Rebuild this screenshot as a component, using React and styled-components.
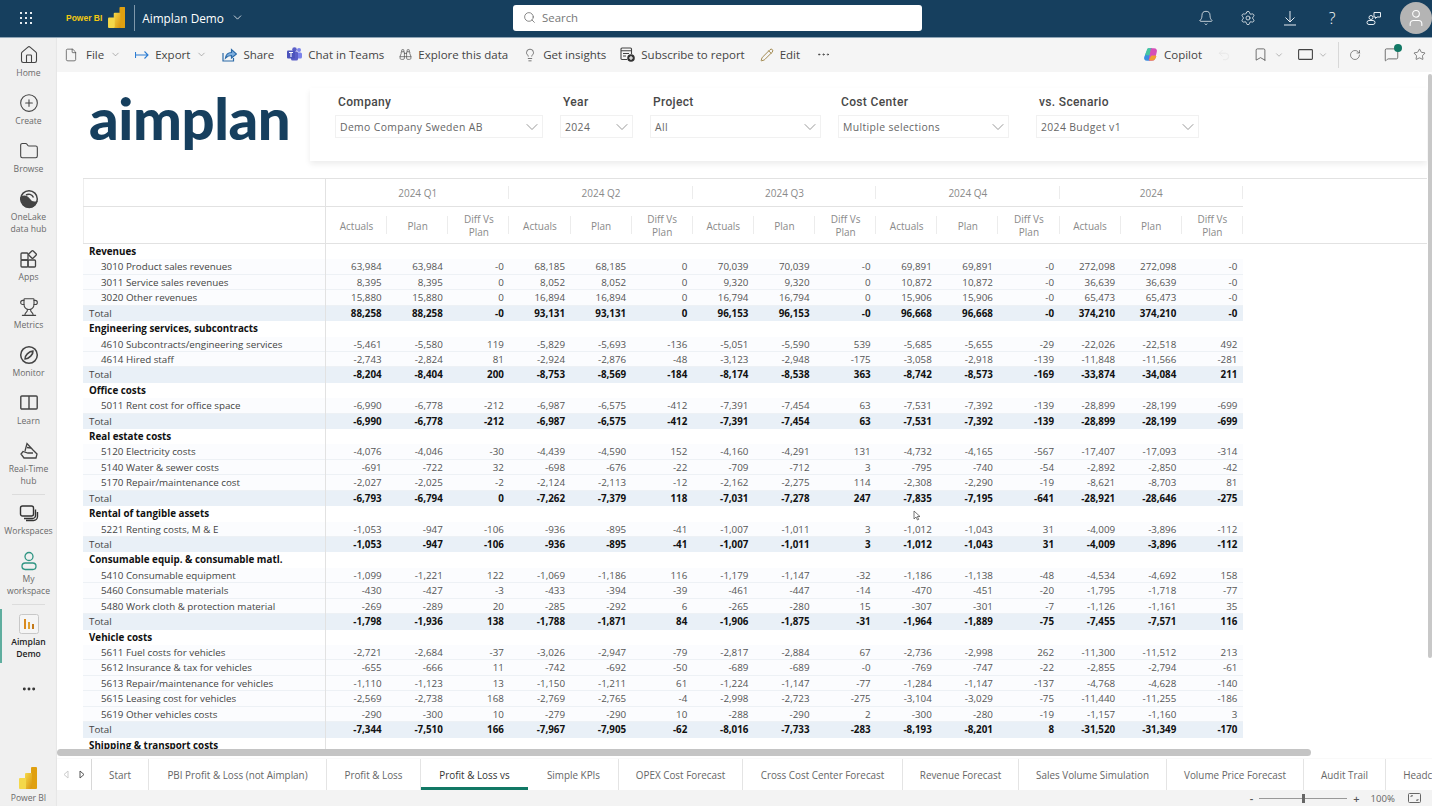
import React from 'react'
import styled, { createGlobalStyle } from 'styled-components'
import {
  Bell, Binoculars, Bookmark, ChevronDown, CirclePlus, Ellipsis, File, Folder, House,
  Lightbulb, MessageSquare, Pencil, RotateCw, Search, Settings, Star, Trophy, Undo2, User
} from 'lucide-react'

const GlobalStyle = createGlobalStyle`
html, body { margin: 0; padding: 0; height: 100%; overflow: hidden; }
body { font-family: "Open Sans", "Noto Sans", sans-serif; background: #fff; }
#root { height: 100%; }
* { box-sizing: border-box; }
`

const Page = styled.div`
width: 1432px;
height: 806px;
display: flex;
flex-direction: column;
overflow: hidden;
`

/* top bar */
const TopBar = styled.header`
height: 38px;
flex: none;
display: flex;
align-items: center;
padding-bottom: 2px;
background: #163f5e;
border-bottom: 1px solid #8fa5b6;
color: #fff;
`
const TopLeft = styled.div`
width: 513px;
display: flex;
align-items: center;
`
const Waffle = styled.div`
width: 14px;
margin: 0 30px 0 20px;
display: grid;
grid-template-columns: repeat(3, 2px);
gap: 3px;
span { width: 2px; height: 2px; background: #e6ecf1; }
`
const BrandText = styled.span`
font-family: "Liberation Sans", sans-serif;
font-size: 8.5px;
font-weight: 700;
color: #f2c811;
width: 42px;
margin-left: 2px;
`
const TitleDivider = styled.span`
width: 1px;
height: 26px;
background: #7f98ab;
margin: 0 7px 0 9px;
`
const ReportTitle = styled.span`
font-size: 11.8px;
margin-right: 7px;
`
const SearchBox = styled.div`
width: 409px;
height: 26px;
background: #fff;
border-radius: 3px;
display: flex;
align-items: center;
gap: 6px;
padding-left: 10px;
color: #777;
font-size: 11.4px;
`
const TopRight = styled.div`
flex: 1;
display: flex;
align-items: center;
justify-content: flex-end;
`
const TopIcon = styled.div`
width: 42px;
display: flex;
justify-content: center;
font-size: 16px;
font-weight: 300;
`
const Avatar = styled.div`
width: 32px;
height: 32px;
margin-left: 5px;
border-radius: 50%;
background: #b4b4b4;
display: flex;
align-items: center;
justify-content: center;
`

/* left rail */
const Body = styled.div`
flex: 1;
display: flex;
min-height: 0;
`
const Rail = styled.nav`
width: 57px;
flex: none;
background: #f0f0f0;
display: flex;
flex-direction: column;
align-items: stretch;
box-shadow: inset -1px 0 1px #e6e6e6;
`
const RailItem = styled.div`
position: relative;
padding: 7px 0;
display: flex;
flex-direction: column;
align-items: center;
gap: 2px;
color: #444;
`
const RailFoot = styled(RailItem)`
margin-top: auto;
padding-bottom: 2px;
gap: 4px;
`
const RailIcon = styled.div`
height: 20px;
display: flex;
align-items: center;
justify-content: center;
`
const RailLabel = styled.div`
font-size: 8.6px;
line-height: 12px;
text-align: center;
color: ${p => (p.$active ? '#222' : '#6a6a6a')};
font-weight: ${p => (p.$active ? 600 : 400)};
`
const ActiveMark = styled.span`
position: absolute;
left: 0;
top: 2px;
bottom: 4px;
width: 2px;
background: #5fae9f;
`
const RailDivider = styled.div`
height: 1px;
margin: 0 12px ${p => p.$after}px;
background: #dcdcdc;
`
const RailMore = styled.div`
display: flex;
justify-content: center;
padding: 14px 0;
color: #333;
`

/* main column */
const Main = styled.main`
flex: 1;
min-width: 0;
display: flex;
flex-direction: column;
`
const Toolbar = styled.div`
height: 34px;
flex: none;
background: #f5f5f5;
display: flex;
align-items: center;
padding: 0 6px 1px 7px;
color: #444;
font-size: 11.5px;
`
const ToolItem = styled.div`
display: flex;
align-items: center;
gap: 6px;
margin-right: ${p => p.$gap ?? 14}px;
white-space: nowrap;
`
const FileLabel = styled.span`
margin-left: 2px;
`
const ToolRight = styled.div`
margin-left: auto;
display: flex;
align-items: center;
`
const ToolSep = styled.span`
width: 1px;
height: 26px;
background: #d8d8d8;
margin: 0 10px 0 10px;
`
const IconWrap = styled.span`
position: relative;
display: flex;
margin-right: ${p => p.$gap ?? 0}px;
`
const Badge = styled.span`
position: absolute;
top: -3px;
right: -3px;
width: 8px;
height: 8px;
border-radius: 50%;
background: #117865;
`

/* report canvas */
const Canvas = styled.section`
position: relative;
flex: 1;
min-height: 0;
background: #fff;
display: flex;
flex-direction: column;
overflow: hidden;
`
const ReportHead = styled.div`
height: 106px;
flex: none;
display: flex;
align-items: flex-start;
padding: 16px 5px 0 32px;
`
const Logo = styled.div`
width: 221px;
height: 72px;
flex: none;
font-family: "Lato", sans-serif;
font-weight: 900;
font-size: 58px;
line-height: 60px;
letter-spacing: -0.4px;
color: #163f5e;
`
const SlicerCard = styled.div`
flex: 1;
height: 73px;
display: flex;
align-items: flex-start;
gap: 17px;
padding: 5px 0 0 25px;
background: #fff;
box-shadow: 0 3px 6px rgba(0, 0, 0, 0.08);
`
const Slicer = styled.div`
width: ${p => p.$w}px;
margin-right: ${p => p.$after ?? 0}px;
`
const SlicerTitle = styled.div`
font-family: "Roboto", sans-serif;
font-size: 12px;
font-weight: 500;
letter-spacing: 0.35px;
line-height: 16px;
color: #484848;
padding: 1px 0 0 3px;
margin-bottom: 5px;
`
const SlicerBox = styled.div`
height: 23px;
border: 1px solid #f1f1f1;
display: flex;
align-items: center;
justify-content: space-between;
padding: 0 0 0 4px;
font-size: 10.4px;
letter-spacing: 0.36px;
color: #666;
`

const TableArea = styled.div`
flex: 1;
min-height: 0;
margin: 0 5px 0 26px;
overflow: hidden;
border-top: 1px solid #e2e2e2;
`
const HeadRow = styled.div`
height: ${p => p.$h}px;
border-bottom: 1px solid #e2e2e2;
display: grid;
grid-template-columns: ${p => p.$columns};
width: ${p => (p.$wide ? '100%' : '1160px')};
`
const TitleCell = styled.div`
border-right: 1px solid #e2e2e2;
border-left: 1px solid #eee;
`
const HeadCell = styled.div`
position: relative;
display: flex;
align-items: center;
justify-content: center;
padding-top: 2px;
text-align: center;
font-size: 10px;
line-height: 13px;
color: #8a8a8a;
&::after {
  content: '';
  position: absolute;
  right: 0;
  top: ${p => p.$inset}px;
  bottom: ${p => p.$inset}px;
  width: 1px;
  background: #ececec;
}
`
const Row = styled.div`
width: 1160px;
height: 15.43px;
display: grid;
grid-template-columns: 243px repeat(15, 61.13px);
background: ${p => (p.$kind === 't' ? '#e9f0f7' : p.$kind === 'd' ? '#fbfcfe' : '#fff')};
box-shadow: ${p => (p.$kind === 'd' ? 'inset 0 -1px 0 #edf1f5' : 'none')};
font-size: 9.8px;
line-height: 16.4px;
white-space: nowrap;
`
const LabelCell = styled.div`
height: 15.43px;
border-right: 1px solid #e2e2e2;
padding-left: ${p => (p.$kind === 'd' ? 18 : 6)}px;
font-weight: ${p => (p.$kind === 'h' ? 700 : 400)};
color: ${p => (p.$kind === 'h' ? '#111' : '#444')};
overflow: hidden;
`
const NumCell = styled.div`
text-align: right;
padding-right: 5.5px;
font-weight: ${p => (p.$kind === 't' ? 700 : 400)};
color: ${p => (p.$kind === 't' ? '#111' : '#555')};
`
const VScroll = styled.div`
position: absolute;
top: 2px;
right: 0;
width: 4px;
height: 584px;
background: #c8c8c8;
border-radius: 2px;
`
const Pointer = styled.svg`
position: absolute;
left: 856px;
top: 438px;
`

const HScrollTrack = styled.div`
height: 10px;
flex: none;
background: #fff;
`
const HScrollThumb = styled.div`
width: 1254px;
height: 7px;
border-radius: 4px;
background: #c4c4c4;
`

/* tabs */
const TabBar = styled.div`
height: 31px;
flex: none;
display: flex;
background: #fff;
overflow: hidden;
box-shadow: 0 0 1px #ddd;
`
const TabArrows = styled.div`
width: 35px;
flex: none;
display: flex;
align-items: center;
justify-content: space-between;
padding: 0 6px;
background: #fff;
border-right: 1px solid #d8d8d8;
`
const Tab = styled.div`
flex: none;
width: ${p => p.$w}px;
height: 100%;
display: flex;
align-items: center;
justify-content: center;
font-size: 9.9px;
white-space: nowrap;
color: ${p => (p.$active ? '#333' : '#666')};
border-right: 1px solid ${p => (p.$active ? 'transparent' : '#e4e4e4')};
box-shadow: ${p => (p.$active ? 'inset 0 -3px 0 #117865' : 'none')};
`
const StatusBar = styled.footer`
height: 16px;
flex: none;
background: #f3f3f3;
display: flex;
align-items: center;
justify-content: flex-end;
padding-right: 11px;
font-size: 9.6px;
color: #666;
`
const ZoomSign = styled.span`
font-size: 11px;
font-weight: 600;
color: #555;
`
const ZoomTrack = styled.div`
position: relative;
width: 88px;
height: 1px;
margin: 0 6px;
background: #999;
`
const ZoomThumb = styled.span`
position: absolute;
left: 43px;
top: -4px;
width: 3px;
height: 9px;
background: #666;
`
const ZoomValue = styled.span`
margin: 0 13px 0 11px;
`

const PowerBiMark = ({ size = 20 }) => (
  <svg width={size * 0.82} height={size} viewBox="0 0 18 22">
    <defs>
      <linearGradient id="pbi" x1="0" y1="0" x2="1" y2="1">
        <stop offset="0" stopColor="#f5d94a" />
        <stop offset="1" stopColor="#d9930d" />
      </linearGradient>
    </defs>
    <rect x="12" y="0" width="6" height="22" rx="1" fill="#e0a010" />
    <rect x="6" y="6" width="7" height="16" rx="1" fill="url(#pbi)" />
    <rect x="0" y="11" width="7" height="11" rx="1" fill="#f4d84a" />
  </svg>
)

const OneLakeIcon = () => (
  <svg width="20" height="20" viewBox="0 0 20 20" fill="none" stroke="#444" strokeWidth="1.5">
    <circle cx="10" cy="10" r="8.300" />
    <path d="M2 8.500c3.500-2.500 6.500-1 8 1.500s4 4 7.500 3C16 17 12.500 19 9 18.300 5 17.500 2.500 13 2 8.500z" fill="#444" />
    <path d="M7 6c2.500-1.500 6-1 7.500 2.500" />
  </svg>
)
const AppsIcon = () => (
  <svg width="20" height="20" viewBox="0 0 20 20" fill="none" stroke="#444" strokeWidth="1.3">
    <rect x="2" y="4" width="7" height="7" rx="1" />
    <rect x="2" y="11" width="7" height="7" rx="1" />
    <rect x="9" y="11" width="7.500" height="7" rx="1" />
    <rect x="10.500" y="2.500" width="6" height="6" rx="1" transform="rotate(45 13.500 5.500)" />
  </svg>
)
const MonitorIcon = () => (
  <svg width="20" height="20" viewBox="0 0 20 20" fill="none" stroke="#444" strokeWidth="1.5">
    <circle cx="10" cy="10" r="8.300" />
    <path d="M6 14c-.5-3 4-8 8-8 .5 3-4 8-8 8z" />
  </svg>
)
const LearnIcon = () => (
  <svg width="20" height="20" viewBox="0 0 20 20" fill="none" stroke="#444" strokeWidth="1.4">
    <rect x="1.800" y="3" width="16.400" height="13" rx="1" />
    <path d="M10 3v13" />
  </svg>
)
const HubIcon = () => (
  <svg width="20" height="20" viewBox="0 0 20 20" fill="none" stroke="#444" strokeWidth="1.3">
    <path d="M6 10 8 2.500 14 9l4 4-1 4H5L2 13l2-2.500L9 12h5" />
    <path d="M8 6.500 12 7" />
  </svg>
)
const WorkspacesIcon = () => (
  <svg width="20" height="20" viewBox="0 0 20 20" fill="none" stroke="#333" strokeWidth="1.4">
    <rect x="1.500" y="3" width="13" height="10" rx="2" />
    <path d="M16.500 6.500v6a3 3 0 0 1-3 3H5M18.500 9v4.500a4 4 0 0 1-4 4H7" />
  </svg>
)
const PersonIcon = () => (
  <svg width="20" height="20" viewBox="0 0 20 20" fill="none" stroke="#2f9583" strokeWidth="1.3">
    <circle cx="10" cy="5.500" r="4" />
    <rect x="3" y="12" width="14" height="6.500" rx="3.200" />
  </svg>
)
const ReportTile = () => (
  <svg width="20" height="20" viewBox="0 0 20 20">
    <rect x="0.500" y="0.500" width="19" height="19" rx="2" fill="#f5f5f5" stroke="#c8c8c8" />
    <rect x="5" y="5" width="2" height="10" fill="#d98a1f" />
    <rect x="9" y="8" width="2" height="7" fill="#e0a030" />
    <rect x="13" y="10" width="2" height="5" fill="#c47a1a" />
  </svg>
)
const ExportIcon = () => (
  <svg width="14" height="10" viewBox="0 0 14 10" fill="none" stroke="#2b7cd3" strokeWidth="1.1">
    <path d="M.5 2v6M.5 5h12.500M9.500 1.500 13 5 9.500 8.500" />
  </svg>
)
const ShareIcon = () => (
  <svg width="15" height="14" viewBox="0 0 15 14" fill="none" stroke="#2b6aa8" strokeWidth="1.2">
    <path d="M1 5v8h10.500v-3" />
    <path d="M3.500 10c.5-3.500 3-5.500 6-5.500V1.500l5 4.500-5 4V7.500c-2.500 0-4.500 1-6 2.500z" fill="#7fb0e0" />
  </svg>
)
const TeamsIcon = () => (
  <svg width="15" height="15" viewBox="0 0 15 15">
    <circle cx="12" cy="3" r="2" fill="#7b83eb" />
    <rect x="9.500" y="5.500" width="5.500" height="6" rx="1.500" fill="#7b83eb" />
    <circle cx="7.500" cy="2.500" r="2.300" fill="#5b5fc7" />
    <rect x="4" y="4.500" width="7" height="9" rx="1.500" fill="#5b5fc7" />
    <rect x="0" y="3.500" width="8" height="8" rx="1" fill="#4b53bc" />
    <path d="M2 5.500h4M4 5.500v4.500" stroke="#fff" strokeWidth="1.100" />
  </svg>
)
const SubscribeIcon = () => (
  <svg width="15" height="15" viewBox="0 0 15 15" fill="none" stroke="#444" strokeWidth="1.1">
    <path d="M7 12.500H2a1 1 0 0 1-1-1V2a1 1 0 0 1 1-1h8.500a1 1 0 0 1 1 1v5" />
    <path d="M1 3.800h10.500M3 6.500h6M3 9h3" />
    <circle cx="11" cy="11" r="3.800" fill="#333" stroke="none" />
    <path d="M11 9v4M9 11h4" stroke="#fff" />
  </svg>
)
const CopilotIcon = () => (
  <svg width="15" height="15" viewBox="0 0 15 15" strokeLinejoin="round">
    <path d="M5.500 2h3L6.500 13H4C2 13 1.500 11.500 2 10z" fill="#3a8fe0" stroke="#3a8fe0" strokeWidth="1.500" />
    <path d="M5 2h3.500L6.800 7.500H3z" fill="#45c6a0" stroke="#45c6a0" strokeWidth="1.500" />
    <path d="M8.500 2H11c2 0 2.500 1.500 2 3l-1.500 6c-.3 1.200-1.200 2-2.500 2H6.500z" fill="#d64fb8" stroke="#d64fb8" strokeWidth="1.500" />
    <path d="M8.500 9H13l-1 2.500c-.4 1-1.200 1.500-2.500 1.500h-3z" fill="#f0a030" stroke="#f0a030" strokeWidth="1" />
  </svg>
)
const ViewIcon = () => (
  <svg width="15" height="11" viewBox="0 0 15 11" fill="none" stroke="#444" strokeWidth="1.1">
    <rect x=".6" y=".6" width="13.800" height="9.800" rx=".8" />
  </svg>
)
const DownloadIcon = () => (
  <svg width="14" height="16" viewBox="0 0 14 16" fill="none" stroke="#e6ecf1" strokeWidth="1">
    <path d="M7 1v11M2.500 7.500 7 12l4.500-4.500M1 15h12" />
  </svg>
)
const FeedbackIcon = () => (
  <svg width="16" height="16" viewBox="0 0 16 16" fill="none" stroke="#e6ecf1" strokeWidth="1">
    <path d="M8 2.500h6.500v4.500H11l-1.500 1.500V7H8z" />
    <circle cx="5" cy="7.500" r="2" />
    <rect x="1" y="10.500" width="8" height="4" rx="2" />
  </svg>
)
const FitIcon = () => (
  <svg width="13" height="10" viewBox="0 0 13 10" fill="none" stroke="#666" strokeWidth="1">
    <rect x=".5" y=".5" width="12" height="9" rx="1" />
    <path d="M3 4V2.800h2M10 6v1.200H8" />
  </svg>
)

const railItems = [
  { label: ['Home'], icon: <House size={20} strokeWidth={1.3} /> },
  { label: ['Create'], icon: <CirclePlus size={20} strokeWidth={1.3} /> },
  { label: ['Browse'], icon: <Folder size={20} strokeWidth={1.3} /> },
  { label: ['OneLake', 'data hub'], icon: <OneLakeIcon /> },
  { label: ['Apps'], icon: <AppsIcon /> },
  { label: ['Metrics'], icon: <Trophy size={20} strokeWidth={1.3} /> },
  { label: ['Monitor'], icon: <MonitorIcon /> },
  { label: ['Learn'], icon: <LearnIcon /> },
  { label: ['Real-Time', 'hub'], icon: <HubIcon /> }
]

const slicers = [
  { title: 'Company', value: 'Demo Company Sweden AB', w: 208 },
  { title: 'Year', value: '2024', w: 73 },
  { title: 'Project', value: 'All', w: 171 },
  { title: 'Cost Center', value: 'Multiple selections', w: 171, after: 10 },
  { title: 'vs. Scenario', value: '2024 Budget v1', w: 163 }
]

const periods = ['2024 Q1', '2024 Q2', '2024 Q3', '2024 Q4', '2024']

const rows = [
  ['h', 'Revenues'],
  ['d', '3010 Product sales revenues', '63,984 63,984 -0 68,185 68,185 0 70,039 70,039 -0 69,891 69,891 -0 272,098 272,098 -0'],
  ['d', '3011 Service sales revenues', '8,395 8,395 0 8,052 8,052 0 9,320 9,320 0 10,872 10,872 -0 36,639 36,639 -0'],
  ['d', '3020 Other revenues', '15,880 15,880 0 16,894 16,894 0 16,794 16,794 0 15,906 15,906 -0 65,473 65,473 -0'],
  ['t', 'Total', '88,258 88,258 -0 93,131 93,131 0 96,153 96,153 -0 96,668 96,668 -0 374,210 374,210 -0'],
  ['h', 'Engineering services, subcontracts'],
  ['d', '4610 Subcontracts/engineering services', '-5,461 -5,580 119 -5,829 -5,693 -136 -5,051 -5,590 539 -5,685 -5,655 -29 -22,026 -22,518 492'],
  ['d', '4614 Hired staff', '-2,743 -2,824 81 -2,924 -2,876 -48 -3,123 -2,948 -175 -3,058 -2,918 -139 -11,848 -11,566 -281'],
  ['t', 'Total', '-8,204 -8,404 200 -8,753 -8,569 -184 -8,174 -8,538 363 -8,742 -8,573 -169 -33,874 -34,084 211'],
  ['h', 'Office costs'],
  ['d', '5011 Rent cost for office space', '-6,990 -6,778 -212 -6,987 -6,575 -412 -7,391 -7,454 63 -7,531 -7,392 -139 -28,899 -28,199 -699'],
  ['t', 'Total', '-6,990 -6,778 -212 -6,987 -6,575 -412 -7,391 -7,454 63 -7,531 -7,392 -139 -28,899 -28,199 -699'],
  ['h', 'Real estate costs'],
  ['d', '5120 Electricity costs', '-4,076 -4,046 -30 -4,439 -4,590 152 -4,160 -4,291 131 -4,732 -4,165 -567 -17,407 -17,093 -314'],
  ['d', '5140 Water & sewer costs', '-691 -722 32 -698 -676 -22 -709 -712 3 -795 -740 -54 -2,892 -2,850 -42'],
  ['d', '5170 Repair/maintenance cost', '-2,027 -2,025 -2 -2,124 -2,113 -12 -2,162 -2,275 114 -2,308 -2,290 -19 -8,621 -8,703 81'],
  ['t', 'Total', '-6,793 -6,794 0 -7,262 -7,379 118 -7,031 -7,278 247 -7,835 -7,195 -641 -28,921 -28,646 -275'],
  ['h', 'Rental of tangible assets'],
  ['d', '5221 Renting costs, M & E', '-1,053 -947 -106 -936 -895 -41 -1,007 -1,011 3 -1,012 -1,043 31 -4,009 -3,896 -112'],
  ['t', 'Total', '-1,053 -947 -106 -936 -895 -41 -1,007 -1,011 3 -1,012 -1,043 31 -4,009 -3,896 -112'],
  ['h', 'Consumable equip. & consumable matl.'],
  ['d', '5410 Consumable equipment', '-1,099 -1,221 122 -1,069 -1,186 116 -1,179 -1,147 -32 -1,186 -1,138 -48 -4,534 -4,692 158'],
  ['d', '5460 Consumable materials', '-430 -427 -3 -433 -394 -39 -461 -447 -14 -470 -451 -20 -1,795 -1,718 -77'],
  ['d', '5480 Work cloth & protection material', '-269 -289 20 -285 -292 6 -265 -280 15 -307 -301 -7 -1,126 -1,161 35'],
  ['t', 'Total', '-1,798 -1,936 138 -1,788 -1,871 84 -1,906 -1,875 -31 -1,964 -1,889 -75 -7,455 -7,571 116'],
  ['h', 'Vehicle costs'],
  ['d', '5611 Fuel costs for vehicles', '-2,721 -2,684 -37 -3,026 -2,947 -79 -2,817 -2,884 67 -2,736 -2,998 262 -11,300 -11,512 213'],
  ['d', '5612 Insurance & tax for vehicles', '-655 -666 11 -742 -692 -50 -689 -689 -0 -769 -747 -22 -2,855 -2,794 -61'],
  ['d', '5613 Repair/maintenance for vehicles', '-1,110 -1,123 13 -1,150 -1,211 61 -1,224 -1,147 -77 -1,284 -1,147 -137 -4,768 -4,628 -140'],
  ['d', '5615 Leasing cost for vehicles', '-2,569 -2,738 168 -2,769 -2,765 -4 -2,998 -2,723 -275 -3,104 -3,029 -75 -11,440 -11,255 -186'],
  ['d', '5619 Other vehicles costs', '-290 -300 10 -279 -290 10 -288 -290 2 -300 -280 -19 -1,157 -1,160 3'],
  ['t', 'Total', '-7,344 -7,510 166 -7,967 -7,905 -62 -8,016 -7,733 -283 -8,193 -8,201 8 -31,520 -31,349 -170'],
  ['h', 'Shipping & transport costs']
]

const tabs = [
  { name: 'Start', w: 57 },
  { name: 'PBI Profit & Loss (not Aimplan)', w: 178 },
  { name: 'Profit & Loss', w: 94 },
  { name: 'Profit & Loss vs', w: 108, active: true },
  { name: 'Simple KPIs', w: 90 },
  { name: 'OPEX Cost Forecast', w: 124 },
  { name: 'Cross Cost Center Forecast', w: 160 },
  { name: 'Revenue Forecast', w: 116 },
  { name: 'Sales Volume Simulation', w: 148 },
  { name: 'Volume Price Forecast', w: 137 },
  { name: 'Audit Trail', w: 82 },
  { name: 'Headcount', w: 86 }
]

const Chevron = ({ size = 12, color = '#777', gap = 0 }) => (
  <IconWrap $gap={gap}><ChevronDown size={size} color={color} strokeWidth={1.2} /></IconWrap>
)

const App = () => {
  return (
    <Page>
      <GlobalStyle />
      <TopBar>
        <TopLeft>
          <Waffle>{Array.from({ length: 9 }, (_, i) => <span key={i} />)}</Waffle>
          <BrandText>Power BI</BrandText>
          <PowerBiMark size={21} />
          <TitleDivider />
          <ReportTitle>Aimplan Demo</ReportTitle>
          <ChevronDown size={13} color="#fff" strokeWidth={1.4} />
        </TopLeft>
        <SearchBox>
          <Search size={13} color="#666" strokeWidth={1.4} />
          Search
        </SearchBox>
        <TopRight>
          <TopIcon><Bell size={16} strokeWidth={1.1} /></TopIcon>
          <TopIcon><Settings size={16} strokeWidth={1.1} /></TopIcon>
          <TopIcon><DownloadIcon /></TopIcon>
          <TopIcon>?</TopIcon>
          <TopIcon><FeedbackIcon /></TopIcon>
          <Avatar><User size={20} color="#fff" strokeWidth={1.3} /></Avatar>
        </TopRight>
      </TopBar>
      <Body>
        <Rail>
          {railItems.map(item => (
            <RailItem key={item.label[0]}>
              <RailIcon>{item.icon}</RailIcon>
              <RailLabel>{item.label.map(l => <div key={l}>{l}</div>)}</RailLabel>
            </RailItem>
          ))}
          <RailDivider $after={1} />
          <RailItem>
            <RailIcon><WorkspacesIcon /></RailIcon>
            <RailLabel>Workspaces</RailLabel>
          </RailItem>
          <RailItem>
            <RailIcon><PersonIcon /></RailIcon>
            <RailLabel><div>My</div><div>workspace</div></RailLabel>
          </RailItem>
          <RailDivider $after={2} />
          <RailItem>
            <ActiveMark />
            <RailIcon><ReportTile /></RailIcon>
            <RailLabel $active><div>Aimplan</div><div>Demo</div></RailLabel>
          </RailItem>
          <RailMore><Ellipsis size={16} strokeWidth={2.4} /></RailMore>
          <RailFoot>
            <RailIcon><PowerBiMark size={22} /></RailIcon>
            <RailLabel>Power BI</RailLabel>
          </RailFoot>
        </Rail>
        <Main>
          <Toolbar>
            <ToolItem $gap={14}><File size={14} strokeWidth={1.2} /><FileLabel>File</FileLabel><Chevron size={11} /></ToolItem>
            <ToolItem $gap={15}><ExportIcon /><span>Export</span><Chevron size={11} /></ToolItem>
            <ToolItem $gap={13}><ShareIcon /><span>Share</span></ToolItem>
            <ToolItem $gap={15}><TeamsIcon /><span>Chat in Teams</span></ToolItem>
            <ToolItem $gap={15}><Binoculars size={13} strokeWidth={1.2} /><span>Explore this data</span></ToolItem>
            <ToolItem $gap={14}><Lightbulb size={14} strokeWidth={1.2} /><span>Get insights</span></ToolItem>
            <ToolItem $gap={15}><SubscribeIcon /><span>Subscribe to report</span></ToolItem>
            <ToolItem $gap={16}><Pencil size={14} color="#8a6a1f" strokeWidth={1.3} /><span>Edit</span></ToolItem>
            <ToolItem $gap={0}><Ellipsis size={15} strokeWidth={1.4} /></ToolItem>
            <ToolRight>
              <ToolItem $gap={15}><CopilotIcon /><span>Copilot</span></ToolItem>
              <IconWrap $gap={22}><Undo2 size={14} color="#e4e4e4" strokeWidth={1.2} /></IconWrap>
              <IconWrap $gap={6}><Bookmark size={15} strokeWidth={1.2} /></IconWrap>
              <Chevron size={10} gap={14} />
              <IconWrap $gap={5}><ViewIcon /></IconWrap>
              <Chevron size={10} />
              <ToolSep />
              <IconWrap $gap={23}><RotateCw size={12} strokeWidth={1.2} /></IconWrap>
              <IconWrap $gap={14}>
                <MessageSquare size={15} strokeWidth={1.2} />
                <Badge />
              </IconWrap>
              <IconWrap><Star size={13} strokeWidth={1.2} /></IconWrap>
            </ToolRight>
          </Toolbar>
          <Canvas>
            <ReportHead>
              <Logo>aimplan</Logo>
              <SlicerCard>
                {slicers.map(s => (
                  <Slicer key={s.title} $w={s.w} $after={s.after}>
                    <SlicerTitle>{s.title}</SlicerTitle>
                    <SlicerBox>
                      {s.value}
                      <ChevronDown size={20} color="#777" strokeWidth={0.9} />
                    </SlicerBox>
                  </Slicer>
                ))}
              </SlicerCard>
            </ReportHead>
            <TableArea>
              <HeadRow $h={28} $columns="243px repeat(5, 183.4px)">
                <TitleCell />
                {periods.map(p => <HeadCell key={p} $inset={7}>{p}</HeadCell>)}
              </HeadRow>
              <HeadRow $wide $h={37} $columns="243px repeat(15, 61.13px)">
                <TitleCell />
                {periods.map(p => (
                  <React.Fragment key={p}>
                    <HeadCell $inset={9}>Actuals</HeadCell>
                    <HeadCell $inset={9}>Plan</HeadCell>
                    <HeadCell $inset={9}>Diff Vs<br />Plan</HeadCell>
                  </React.Fragment>
                ))}
              </HeadRow>
              {rows.map(([kind, label, values], i) => (
                <Row key={i} $kind={kind}>
                  <LabelCell $kind={kind}>{label}</LabelCell>
                  {values && values.split(' ').map((v, j) => <NumCell key={j} $kind={kind}>{v}</NumCell>)}
                </Row>
              ))}
            </TableArea>
            <VScroll />
            <Pointer width="8" height="11" viewBox="0 0 8 11" fill="#fff" stroke="#555" strokeWidth=".8">
              <path d="M1 1v8l2-2 1.500 3 1.200-.6L4.300 6.500H7z" />
            </Pointer>
          </Canvas>
          <HScrollTrack><HScrollThumb /></HScrollTrack>
          <TabBar>
            <TabArrows>
              <svg width="6" height="9" viewBox="0 0 6 9" fill="none" stroke="#ccc"><path d="M5 1 1 4.500 5 8z" /></svg>
              <svg width="6" height="9" viewBox="0 0 6 9" fill="none" stroke="#555"><path d="M1 1l4 3.500L1 8z" /></svg>
            </TabArrows>
            {tabs.map(t => <Tab key={t.name} $w={t.w} $active={t.active}>{t.name}</Tab>)}
          </TabBar>
          <StatusBar>
            <ZoomSign>-</ZoomSign>
            <ZoomTrack><ZoomThumb /></ZoomTrack>
            <ZoomSign>+</ZoomSign>
            <ZoomValue>100%</ZoomValue>
            <FitIcon />
          </StatusBar>
        </Main>
      </Body>
    </Page>
  )
}

export default App
